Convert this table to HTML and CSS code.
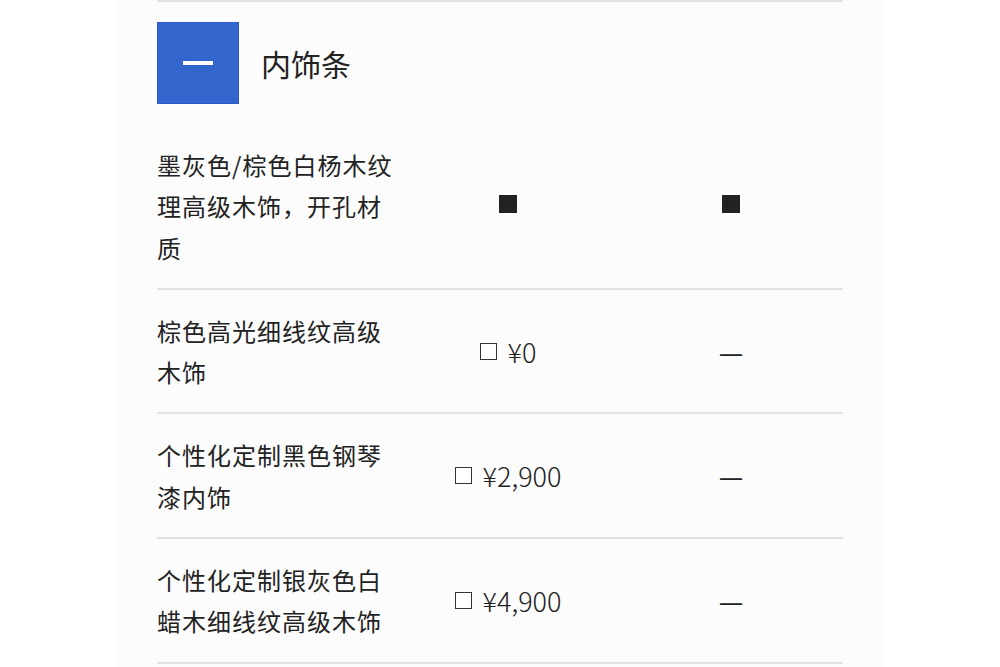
FILE: index.html
```html
<!DOCTYPE html>
<html lang="zh-CN">
<head>
<meta charset="utf-8">
<title>内饰条</title>
<link rel="stylesheet" href="styles.css">
</head>
<body>
<div class="panel">
  <section class="section">
    <div class="section-head">
      <div class="toggle"><span class="minus"></span></div>
      <h2 class="section-title">内饰条</h2>
    </div>
    <div class="row">
      <div class="cell name">墨灰色/棕色白杨木纹理高级木饰，开孔材质</div>
      <div class="cell val"><span class="std"></span></div>
      <div class="cell val"><span class="std"></span></div>
    </div>
    <div class="row">
      <div class="cell name">棕色高光细线纹高级木饰</div>
      <div class="cell val price"><span class="opt"></span><span class="amount">¥0</span></div>
      <div class="cell val dash">—</div>
    </div>
    <div class="row">
      <div class="cell name">个性化定制黑色钢琴漆内饰</div>
      <div class="cell val price"><span class="opt"></span><span class="amount">¥2,900</span></div>
      <div class="cell val dash">—</div>
    </div>
    <div class="row">
      <div class="cell name">个性化定制银灰色白蜡木细线纹高级木饰</div>
      <div class="cell val price"><span class="opt"></span><span class="amount">¥4,900</span></div>
      <div class="cell val dash">—</div>
    </div>
  </section>
</div>
</body>
</html>
```
FILE: styles.css
```css
html, body {
  margin: 0;
  padding: 0;
  background: #ffffff;
}
body {
  font-family: "Noto Sans CJK SC", "Noto Sans", sans-serif;
  color: #222222;
}
.panel {
  width: 768px;
  margin: 0 auto;
  padding: 0 41px;
  box-sizing: border-box;
  background: #fcfcfc;
  min-height: 667px;
}
.section {
  border-top: 2px solid #e2e2e2;
}
.section-head {
  display: flex;
  align-items: center;
  gap: 22px;
  padding: 20px 0;
}
.toggle {
  width: 82px;
  height: 82px;
  box-sizing: border-box;
  background: #3366cc;
  border: 1px solid #2a5ccf;
  display: flex;
  align-items: center;
  justify-content: center;
}
.minus {
  display: block;
  width: 30px;
  height: 4px;
  background: #ffffff;
}
.section-title {
  margin: 0;
  font-size: 30px;
  font-weight: 400;
  line-height: 40px;
}
.row {
  display: grid;
  grid-template-columns: 240px 222px 1fr;
  align-items: center;
  padding: 20px 0;
  border-bottom: 2px solid #e2e2e2;
}
.cell {
  font-size: 24px;
  line-height: 41.3px;
}
.name {
  letter-spacing: 1px;
}
.val {
  display: flex;
  align-items: center;
  justify-content: center;
}
.std {
  display: block;
  width: 18px;
  height: 18px;
  background: #222222;
  margin-bottom: 4px;
}
.price {
  gap: 11px;
}
.opt {
  display: block;
  width: 17px;
  height: 17px;
  box-sizing: border-box;
  border: 1.5px solid #333333;
  background: #ffffff;
}
.amount {
  font-family: "Noto Sans CJK SC", "Noto Sans", sans-serif;
  font-size: 27px;
  font-weight: 300;
  line-height: 41px;
}
.dash {
  font-family: "Noto Sans", sans-serif;
}
```
